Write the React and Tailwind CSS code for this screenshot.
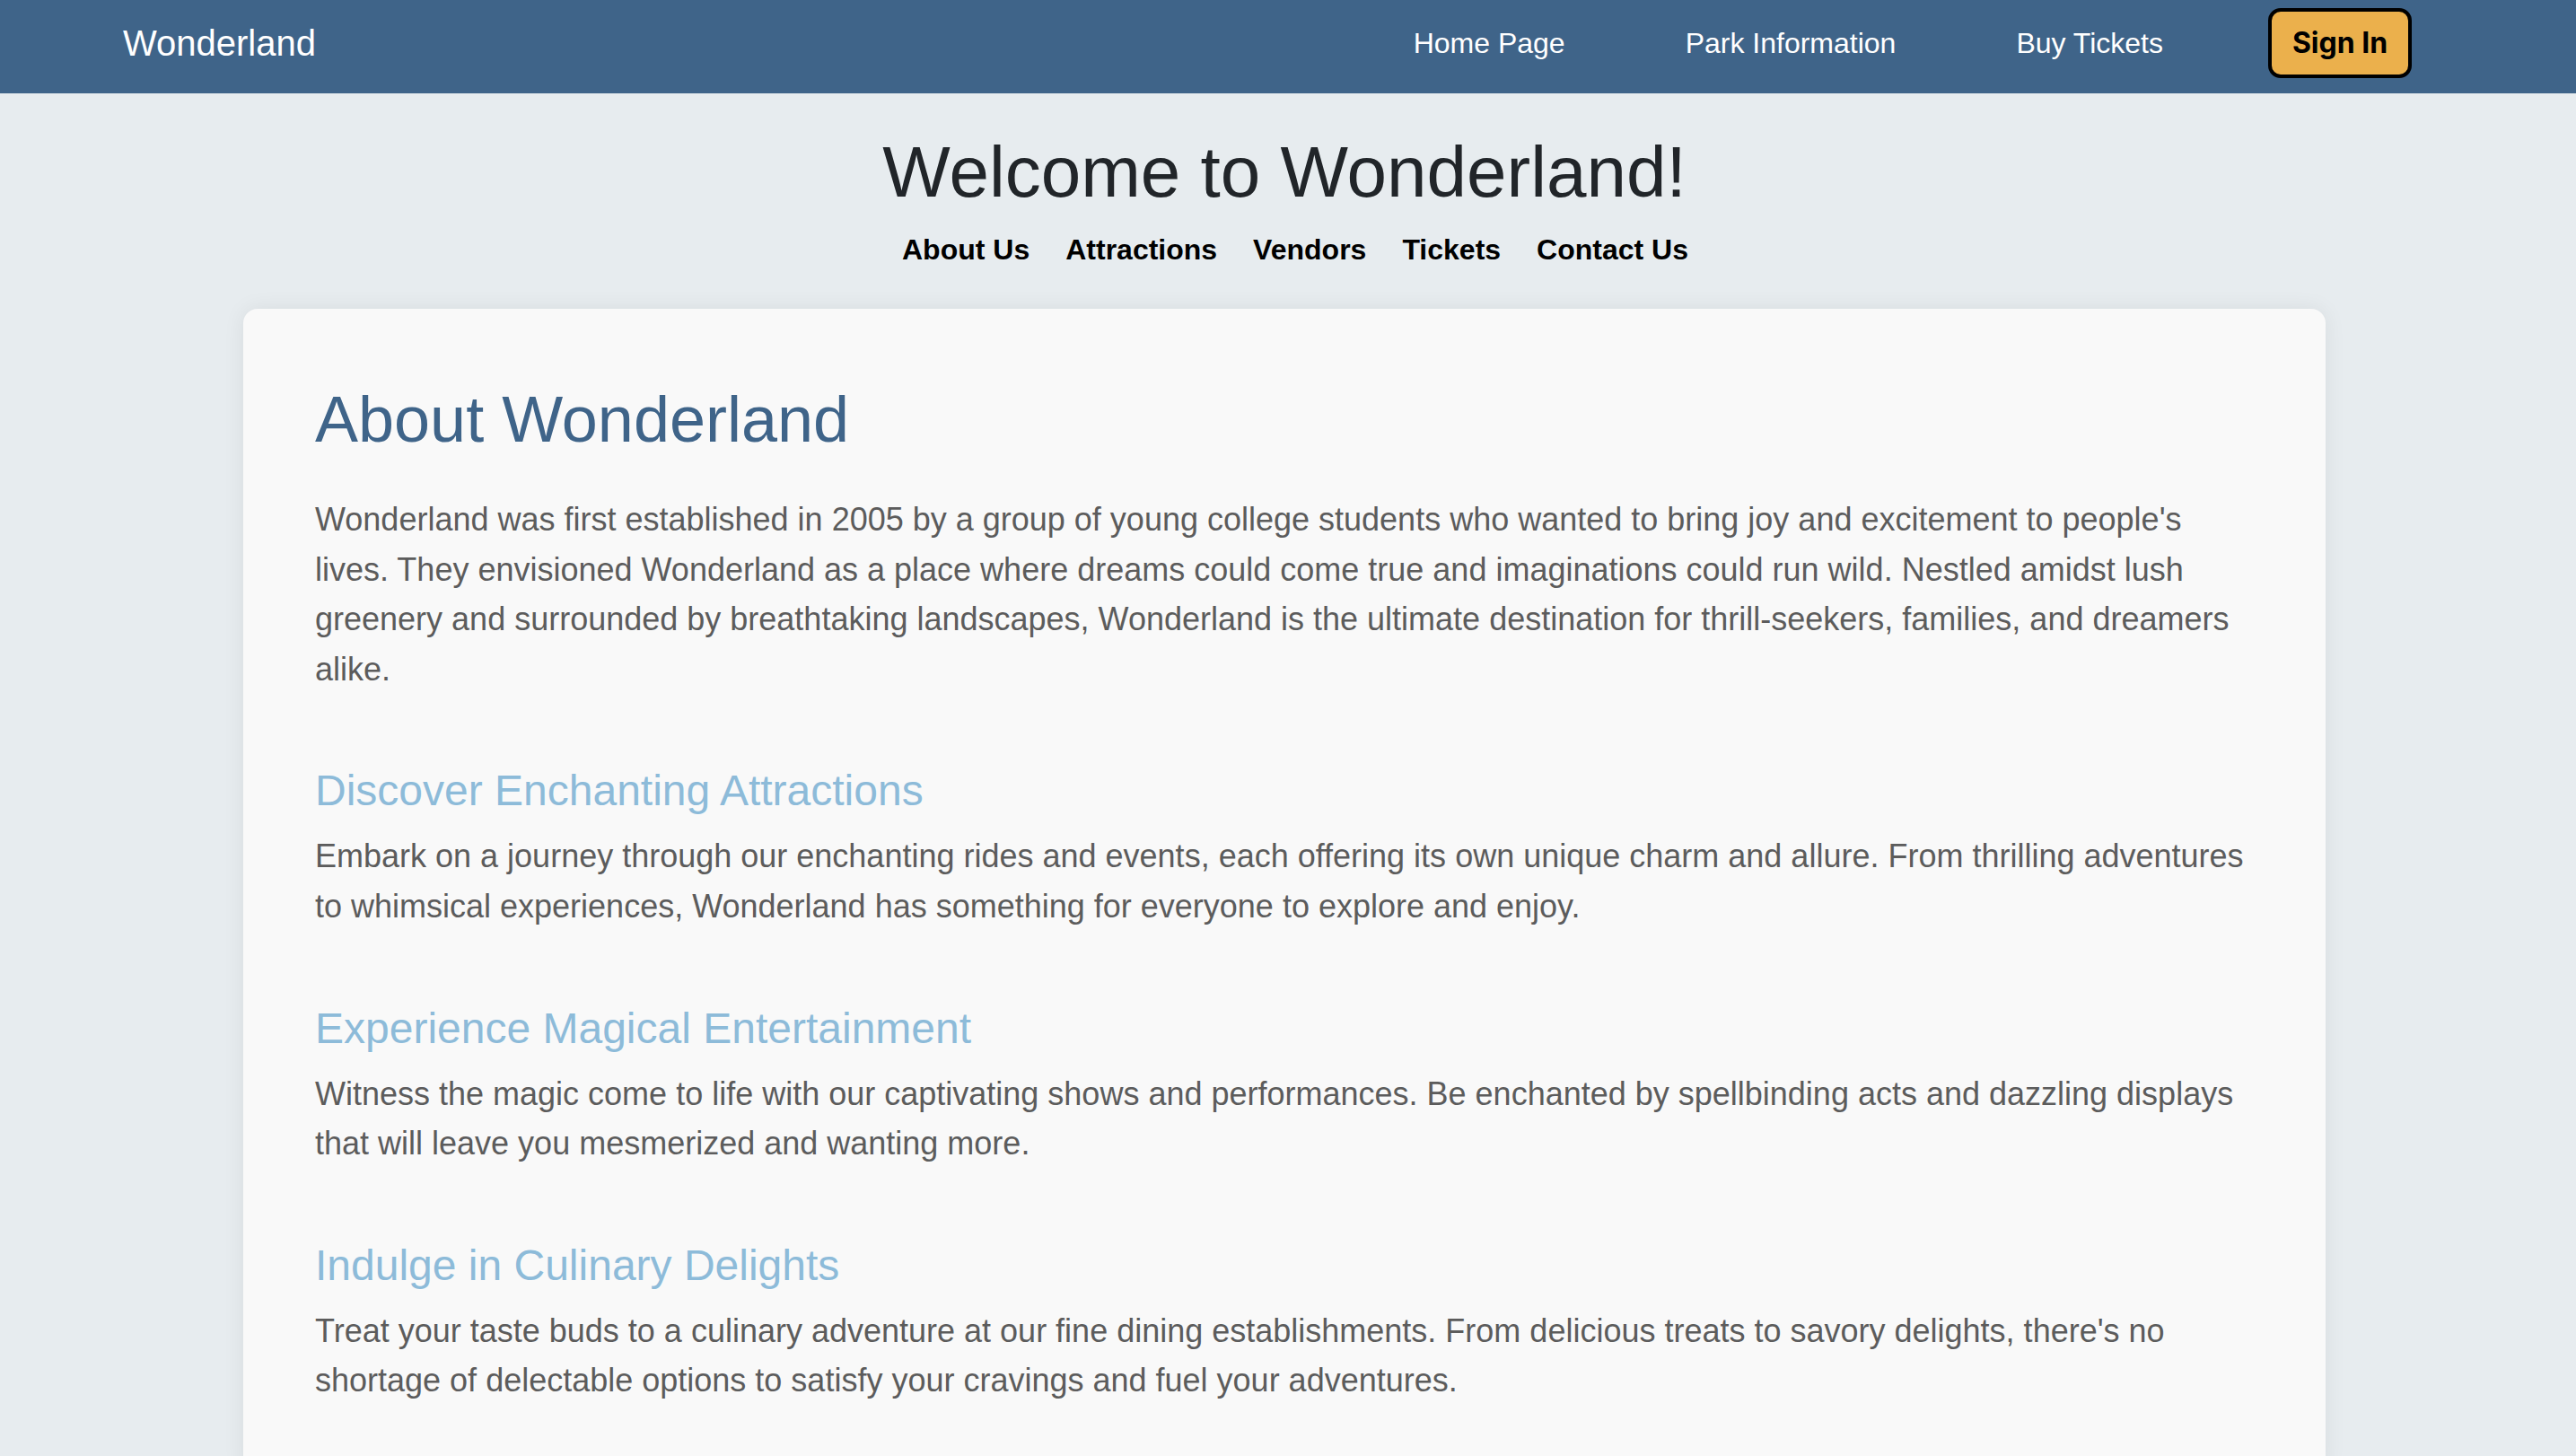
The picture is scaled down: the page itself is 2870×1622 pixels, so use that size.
import React from "react";

const sections = [
  {
    title: "Discover Enchanting Attractions",
    text: "Embark on a journey through our enchanting rides and events, each offering its own unique charm and allure. From thrilling adventures to whimsical experiences, Wonderland has something for everyone to explore and enjoy.",
  },
  {
    title: "Experience Magical Entertainment",
    text: "Witness the magic come to life with our captivating shows and performances. Be enchanted by spellbinding acts and dazzling displays that will leave you mesmerized and wanting more.",
  },
  {
    title: "Indulge in Culinary Delights",
    text: "Treat your taste buds to a culinary adventure at our fine dining establishments. From delicious treats to savory delights, there's no shortage of delectable options to satisfy your cravings and fuel your adventures.",
  },
];

export default function App() {
  return (
    <div className="min-h-[1622px] bg-[#e7ecef] font-['Liberation_Sans',Arial,sans-serif]">
      <nav className="h-[104px] bg-[#3f6489] flex items-center justify-between pl-[137px] pr-[183px] pb-[8px]">
        <span className="text-white text-[40px] leading-none">Wonderland</span>
        <div className="flex items-center">
          <a className="text-white text-[32px] mr-[134px]">Home Page</a>
          <a className="text-white text-[32px] mr-[134px]">Park Information</a>
          <a className="text-white text-[32px] mr-[117px]">Buy Tickets</a>
          <button className="h-[78px] w-[160px] rounded-[14px] border-[4px] border-black bg-[#ebb04c] text-black text-[32px] font-bold font-['Inter',sans-serif]">
            Sign In
          </button>
        </div>
      </nav>

      <div className="w-[2862px]">
        <header className="pt-[40px] flex flex-col items-center">
          <h1 className="text-[80px] leading-[96px] text-[#212529]">Welcome to Wonderland!</h1>
          <ul className="mt-[19px] pl-[24px] flex gap-[40px] text-[32px] leading-[38px] font-bold text-black">
            <li>About Us</li>
            <li>Attractions</li>
            <li>Vendors</li>
            <li>Tickets</li>
            <li>Contact Us</li>
          </ul>
        </header>

        <main className="mt-[47px] mx-auto w-[2320px] bg-[#f9f9f9] rounded-[16px] shadow-[0_0_24px_rgba(0,0,0,0.07)] px-[80px] pt-[80px] pb-[80px]">
          <h2 className="text-[72px] leading-[86px] text-[#3f6489]">About Wonderland</h2>
          <p className="mt-[41px] text-[36px] leading-[55.6px] text-[#5c5c5c]">
            Wonderland was first established in 2005 by a group of young college students who wanted to bring joy and excitement to people's lives. They envisioned Wonderland as a place where dreams could come true and imaginations could run wild. Nestled amidst lush greenery and surrounded by breathtaking landscapes, Wonderland is the ultimate destination for thrill-seekers, families, and dreamers alike.
          </p>
          {sections.map((s) => (
            <section key={s.title} className="mt-[79px]">
              <h3 className="text-[48px] leading-[58px] text-[#8dbbd9]">{s.title}</h3>
              <p className="mt-[16px] text-[36px] leading-[55.6px] text-[#5c5c5c]">{s.text}</p>
            </section>
          ))}
        </main>
      </div>
    </div>
  );
}
